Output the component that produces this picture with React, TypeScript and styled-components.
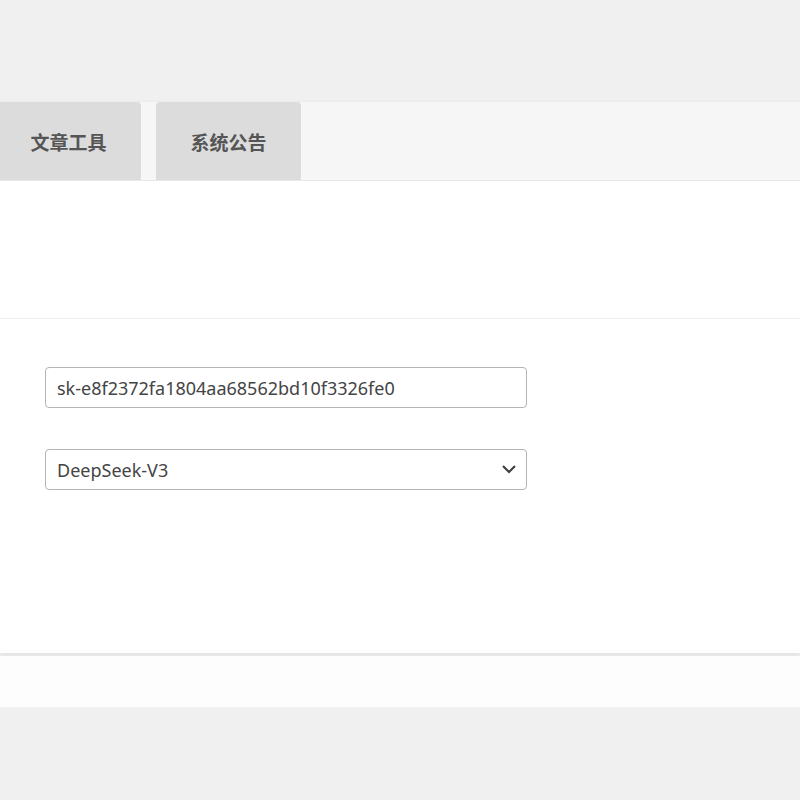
import React from 'react';
import styled, { createGlobalStyle } from 'styled-components';

const GlobalStyle = createGlobalStyle`
  body {
    margin: 0;
    background: #f0f0f0;
    font-family: "Noto Sans", "Noto Sans CJK SC", sans-serif;
  }
`;

const Page = styled.div`
  padding-top: 102px;
`;

const Panel = styled.div`
  background: #ffffff;
  box-shadow: 0 1px 4px rgba(0, 0, 0, 0.08);
`;

const TabBar = styled.div`
  display: flex;
  gap: 15px;
  height: 78px;
  margin-left: -4px;
  background: #f6f6f6;
  border-bottom: 1px solid #e8e8e8;
`;

const Tab = styled.div`
  display: flex;
  align-items: center;
  justify-content: center;
  width: 145px;
  background: #dcdcdc;
  border-radius: 4px 4px 0 0;
  color: #555;
  font-size: 19px;
  font-weight: 700;
  font-family: "Noto Sans CJK SC", sans-serif;
`;

const Header = styled.div`
  height: 137px;
  border-bottom: 1px solid #efefef;
`;

const Form = styled.div`
  display: flex;
  flex-direction: column;
  gap: 41px;
  padding: 48px 0 0 45px;
  height: 286px;
`;

const Field = styled.div`
  position: relative;
  width: 482px;
`;

const TextInput = styled.input`
  box-sizing: border-box;
  width: 100%;
  height: 41px;
  padding: 0 11px;
  border: 1px solid #b4b4b4;
  border-radius: 4px;
  font-family: "Noto Sans", sans-serif;
  font-size: 18px;
  color: #444;
  background: #fff;
  outline: none;
`;

const Select = styled.select`
  box-sizing: border-box;
  width: 100%;
  height: 41px;
  padding: 0 11px;
  border: 1px solid #b4b4b4;
  border-radius: 4px;
  font-family: "Noto Sans", sans-serif;
  font-size: 18px;
  color: #444;
  background: #fff;
  appearance: none;
  outline: none;
`;

const Chevron = styled.svg`
  position: absolute;
  right: 10px;
  top: 14px;
  pointer-events: none;
`;

const Footer = styled.div`
  height: 51px;
  margin-top: 3px;
  background: #fdfdfd;
  box-shadow: 0 1px 4px rgba(0, 0, 0, 0.08);
`;

export default function App() {
  return (
    <>
      <GlobalStyle />
      <Page>
        <Panel>
          <TabBar>
            <Tab>文章工具</Tab>
            <Tab>系统公告</Tab>
          </TabBar>
          <Header />
          <Form>
            <Field>
              <TextInput defaultValue="sk-e8f2372fa1804aa68562bd10f3326fe0" />
            </Field>
            <Field>
              <Select defaultValue="DeepSeek-V3">
                <option>DeepSeek-V3</option>
                <option>DeepSeek-R1</option>
              </Select>
              <Chevron width="16" height="12" viewBox="0 0 16 12">
                <path d="M2 3 L8 9 L14 3" fill="none" stroke="#3c3c3c" strokeWidth="2" />
              </Chevron>
            </Field>
          </Form>
        </Panel>
        <Footer />
      </Page>
    </>
  );
}
